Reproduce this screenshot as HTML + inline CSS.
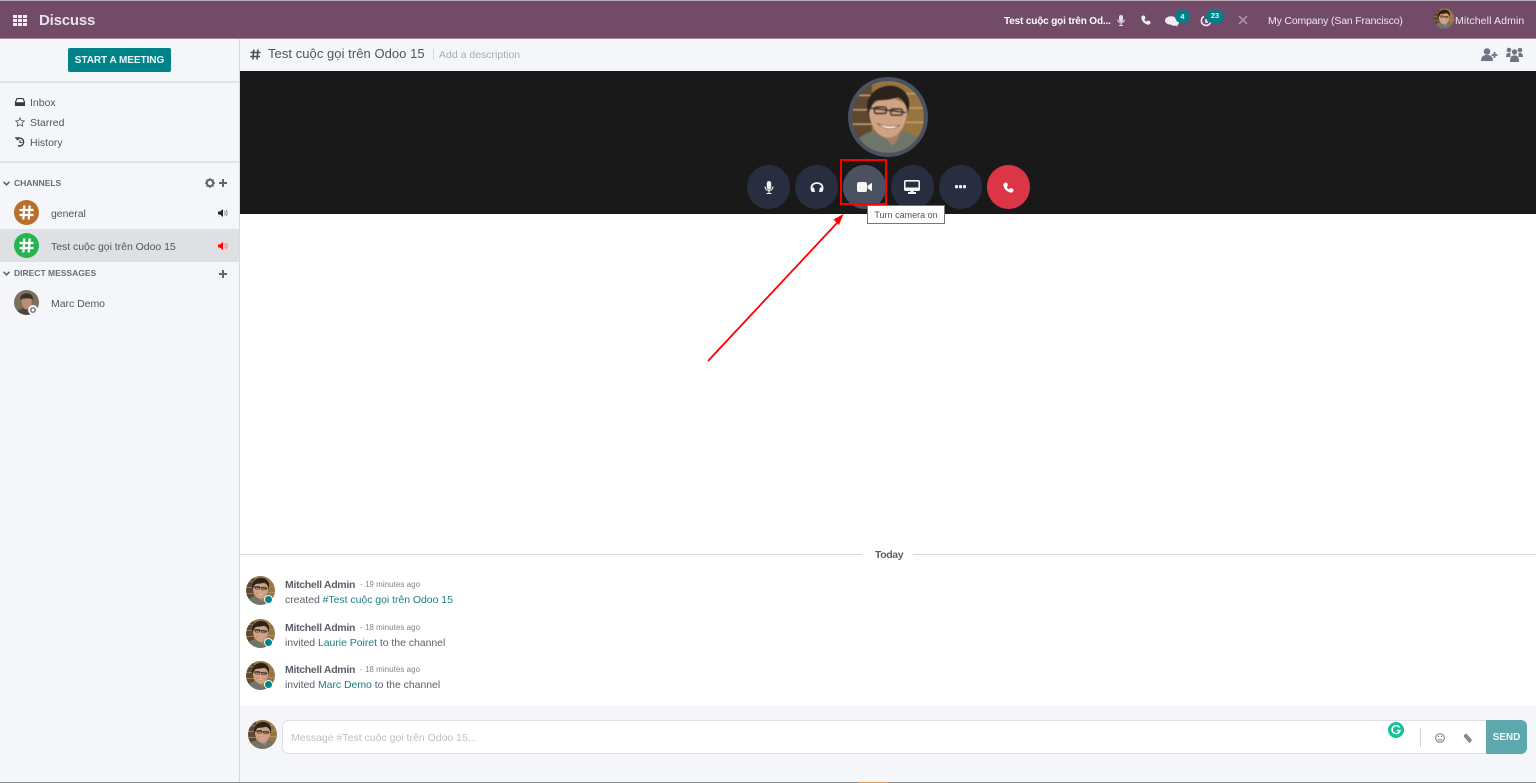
<!DOCTYPE html>
<html>
<head>
<meta charset="utf-8">
<style>
html,body{margin:0;padding:0;width:1536px;height:783px;overflow:hidden;background:#f4f6fa}
body{position:relative;font-family:"Liberation Sans","Noto Sans CJK SC",sans-serif;color:#4c4c4c}
.a{position:absolute;white-space:nowrap}
svg{position:absolute;display:block;overflow:visible}
.t12{font-size:10.5px;color:#51565f;line-height:14px}
.hd{font-size:8.5px;font-weight:bold;color:#666d78;line-height:12px}
.ch{font-size:10.5px;color:#4f5661;line-height:14px;letter-spacing:-.03px}
.btn{position:absolute;top:165px;width:43px;height:43.5px;border-radius:50%;background:#262e40}
.nm{font-size:10.5px;font-weight:bold;color:#5a5f68;line-height:14px;letter-spacing:-.3px}
.tm{font-size:8px;color:#80848b;line-height:12px;letter-spacing:.03px}
.ms{font-size:10.5px;color:#5a5f68;line-height:14px;letter-spacing:-.04px}
.ln{color:#1e7d80}
.dot{position:absolute;width:7px;height:7px;border-radius:50%;background:#00868a;border:1.5px solid #fff}
</style>
</head>
<body>
<svg width="0" height="0" style="position:absolute">
<defs>
<filter id="b" x="-5%" y="-5%" width="110%" height="110%"><feGaussianBlur stdDeviation=".7"/></filter>
<symbol id="face" viewBox="0 0 80 80">
<g filter="url(#b)">
<rect width="80" height="80" fill="#98743f"/>
<rect width="22" height="80" fill="#5f4730"/>
<path d="M0 16H22M0 32H22M0 48H22M60 14H80M60 30H80M60 46H80" stroke="#c09f6c" stroke-width="1.600"/>
<path d="M0 80C2 62 16 57 28 55L54 55C66 58 76 62 80 80Z" fill="#70756b"/>
<path d="M34 60L46 72 54 58Z" fill="#a97e64"/>
<path d="M19 28C18 48 28 63 40 63C52 63 63 48 61 26L40 16Z" fill="#d2a285"/>
<path d="M18 38C12 16 28 5 43 5C58 6 68 18 62 36C60 26 57 21 51 18C42 22 31 21 26 22C22 27 20 32 18 38Z" fill="#2c211b"/>
<path d="M20 30L60 35" stroke="#322a26" stroke-width="1.800"/>
<rect x="25" y="29" width="13" height="7" rx="2" fill="none" stroke="#322a26" stroke-width="1.800"/>
<rect x="43" y="31" width="13" height="7" rx="2" fill="none" stroke="#322a26" stroke-width="1.800"/>
<path d="M28 47C35 54 46 55 53 49C46 51 36 51 28 47Z" fill="#fff" stroke="#86493a" stroke-width=".8"/>
</g>
</symbol>
<symbol id="marc" viewBox="0 0 80 80">
<g filter="url(#b)">
<rect width="80" height="80" fill="#7d6e60"/>
<path d="M5 80C8 62 24 58 40 58C56 58 72 62 75 80Z" fill="#4d4640"/>
<path d="M24 30C24 50 32 62 41 62C50 62 58 50 57 28Z" fill="#bd8e70"/>
<path d="M20 34C18 14 32 10 44 11C56 12 62 20 60 34C56 24 30 22 20 34Z" fill="#3d332b"/>
</g>
</symbol>
</defs>
</svg>

<!-- main backgrounds -->
<div class="a" style="left:240px;top:214px;width:1296px;height:492px;background:#fff"></div>
<div class="a" style="left:240px;top:71px;width:1296px;height:143px;background:#191919"></div>

<!-- navbar -->
<div class="a" style="left:0;top:0;width:1536px;height:39px;background:#714b67;border-top:1px solid #b8a9b4;border-bottom:1px solid #a08a9b;box-sizing:border-box"></div>
<svg style="left:13px;top:15px" width="14" height="11" viewBox="0 0 14 11" fill="#f0ecef"><path d="M0 0h4v3H0zM5 0h4v3H5zM10 0h4v3h-4zM0 4h4v3H0zM5 4h4v3H5zM10 4h4v3h-4zM0 8h4v3H0zM5 8h4v3H5zM10 8h4v3h-4z"/></svg>
<div class="a" style="left:39px;top:12px;font-size:15px;font-weight:bold;color:#ecdfe9;line-height:18px;letter-spacing:-.2px">Discuss</div>
<div class="a" style="left:1004px;top:15px;font-size:10px;font-weight:bold;color:#fff;line-height:13px;letter-spacing:-.15px">Test cuộc gọi trên Od...</div>
<svg style="left:1117px;top:15px" width="8" height="11" viewBox="0 0 8 11"><rect x="2" y="0" width="4" height="7" rx="2" fill="#e5dde3"/><path d="M.7 4.5C.7 9 7.3 9 7.3 4.5M4 8V10.5M2 10.5H6" stroke="#e5dde3" fill="none"/></svg>
<svg style="left:1141px;top:15px" width="10" height="10" viewBox="0 0 24 24" fill="#f3eef2"><path d="M5 1L9 2 11 8 8 10C9 13 11 15 14 16L16 13 22 15 23 19C22 22 19 24 16 23 8 21 3 16 1 8 0 5 2 2 5 1Z"/></svg>
<svg style="left:1165px;top:16px" width="14" height="11" viewBox="0 0 14 11" fill="#f3eef2"><ellipse cx="6" cy="4.5" rx="6" ry="4.2"/><ellipse cx="9.5" cy="6.5" rx="4.5" ry="3.3"/><path d="M9 8L13 11 11 7Z"/></svg>
<div class="a" style="left:1175px;top:10px;width:15px;height:13px;border-radius:7px;background:#00808a;color:#e8f4f4;font-size:7.5px;font-weight:bold;line-height:13px;text-align:center">4</div>
<svg style="left:1200px;top:15px" width="12" height="12" viewBox="0 0 12 12" fill="none" stroke="#f3eef2" stroke-width="1.6"><path d="M4 1.5A4.7 4.7 0 1 0 10.7 6.5"/><path d="M6 4V7H8"/></svg>
<div class="a" style="left:1206px;top:10px;width:18px;height:13px;border-radius:7px;background:#00808a;color:#e8f4f4;font-size:7.5px;font-weight:bold;line-height:12px;text-align:center">23</div>
<svg style="left:1238px;top:15px" width="10" height="10" viewBox="0 0 10 10" stroke="#a995a5" stroke-width="1.7"><path d="M1 1L9 9M9 1L1 9"/></svg>
<div class="a" style="left:1268px;top:14.500px;font-size:10.500px;color:#f0e8ee;line-height:13px;letter-spacing:-.16px">My Company (San Francisco)</div>
<svg style="left:1434px;top:8px;border-radius:50%;overflow:hidden" width="20" height="21"><use href="#face" width="20" height="21"/></svg>
<div class="a" style="left:1455px;top:14.500px;font-size:10.500px;color:#f0e8ee;line-height:13px;letter-spacing:.12px">Mitchell Admin</div>

<!-- sidebar -->
<div class="a" style="left:239px;top:39px;width:1px;height:743px;background:#d8dade"></div>
<div class="a" style="left:68px;top:48px;width:103px;height:24px;background:#00848a;border-radius:2px;color:#eef8f8;font-size:10px;font-weight:bold;line-height:25px;text-align:center;letter-spacing:-.05px">START A MEETING</div>
<div class="a" style="left:0;top:81px;width:239px;height:2px;background:#e0e2e6"></div>
<svg style="left:15px;top:98px" width="10" height="8" viewBox="0 0 10 8"><path d="M2 .6H8L9.5 4V7.4H.5V4Z" fill="#fff" stroke="#343a45" stroke-width="1.1"/><rect x=".5" y="4.2" width="9" height="3.2" fill="#343a45"/></svg>
<div class="a t12" style="left:30px;top:96px">Inbox</div>
<svg style="left:15px;top:117px" width="10" height="10" viewBox="0 0 20 20" fill="none" stroke="#484e59" stroke-width="1.5"><path d="M10 1.5L12.6 7.2 18.7 7.9 14.2 12 15.4 18.2 10 15.100 4.600 18.200 5.800 12 1.300 7.900 7.400 7.200Z"/></svg>
<div class="a t12" style="left:30px;top:116px">Starred</div>
<svg style="left:15px;top:137px" width="10" height="10" viewBox="0 0 10 10" fill="none" stroke="#343a45" stroke-width="1.4"><path d="M1.5 2.5A4 4 0 1 1 3 8.7"/><path d="M0 .8H3V3.4" stroke-width="1.2"/><path d="M5 3V5.5H7" stroke-width="1"/></svg>
<div class="a t12" style="left:30px;top:136px">History</div>
<div class="a" style="left:0;top:161px;width:239px;height:2px;background:#e0e2e6"></div>

<svg style="left:3px;top:181px" width="7" height="5" viewBox="0 0 7 5" fill="none" stroke="#5c636e" stroke-width="1.5"><path d="M.5 .8L3.5 3.8 6.5 .8"/></svg>
<div class="a hd" style="left:14px;top:177px">CHANNELS</div>
<svg style="left:205px;top:178px" width="10" height="10" viewBox="0 0 10 10"><circle cx="5" cy="5" r="3.2" fill="none" stroke="#5f6670" stroke-width="2"/><path d="M5 0V10M0 5H10M1.5 1.5L8.500 8.500M8.500 1.500L1.500 8.500" stroke="#5f6670" stroke-width="1.400" stroke-dasharray="1.500 7 1.500 0"/></svg>
<svg style="left:219px;top:179px" width="8" height="8" viewBox="0 0 8 8" stroke="#5f6670" stroke-width="2"><path d="M4 0V8M0 4H8"/></svg>

<div class="a" style="left:14px;top:200px;width:25px;height:25px;border-radius:50%;background:#b96f2b"></div>
<svg style="left:19px;top:205px" width="15" height="15" viewBox="0 0 15 15" stroke="#fff" stroke-width="2.200"><path d="M5.300 .5L4.300 14.500M10.700 .5L9.700 14.500M.5 5H14.500M.5 10H14.500"/></svg>
<div class="a ch" style="left:51px;top:207px">general</div>
<svg style="left:218px;top:209px" width="10" height="8" viewBox="0 0 10 8"><path d="M0 2.500H2L5 0V8L2 5.500H0Z" fill="#20242c"/><path d="M6.500 1.800C7.500 3 7.500 5 6.500 6.200M8 .8C9.500 2.500 9.500 5.500 8 7.200" fill="none" stroke="#8a8f98"/></svg>

<div class="a" style="left:0;top:229px;width:239px;height:33px;background:#dee0e3"></div>
<div class="a" style="left:14px;top:233px;width:25px;height:25px;border-radius:50%;background:#27b44f"></div>
<svg style="left:19px;top:238px" width="15" height="15" viewBox="0 0 15 15" stroke="#fff" stroke-width="2.200"><path d="M5.300 .5L4.300 14.500M10.700 .5L9.700 14.500M.5 5H14.500M.5 10H14.500"/></svg>
<div class="a ch" style="left:51px;top:240px">Test cuộc gọi trên Odoo 15</div>
<svg style="left:218px;top:242px" width="10" height="8" viewBox="0 0 10 8"><path d="M0 2.500H2L5 0V8L2 5.500H0Z" fill="#f00"/><path d="M6.500 1.800C7.500 3 7.500 5 6.500 6.200M8 .8C9.500 2.500 9.500 5.500 8 7.200" fill="none" stroke="#e88"/></svg>

<svg style="left:3px;top:271px" width="7" height="5" viewBox="0 0 7 5" fill="none" stroke="#5c636e" stroke-width="1.500"><path d="M.5 .8L3.500 3.800 6.500 .8"/></svg>
<div class="a hd" style="left:14px;top:267px">DIRECT MESSAGES</div>
<svg style="left:219px;top:270px" width="8" height="8" viewBox="0 0 8 8" stroke="#5f6670" stroke-width="2"><path d="M4 0V8M0 4H8"/></svg>

<svg style="left:14px;top:290px;border-radius:50%;overflow:hidden" width="25" height="25"><use href="#marc" width="25" height="25"/></svg>
<div class="a" style="left:28px;top:305px;width:6px;height:6px;border-radius:50%;background:#fff;border:2px solid #f4f6fa;box-shadow:inset 0 0 0 1.500px #70757d"></div>
<div class="a ch" style="left:51px;top:297px">Marc Demo</div>

<!-- header -->
<svg style="left:250px;top:49px" width="11" height="11" viewBox="0 0 11 11" stroke="#4a505b" stroke-width="1.600"><path d="M3.800 .5L2.800 10.500M8 .5L7 10.500M.5 3.500H10.500M.2 7.500H10"/></svg>
<div class="a" style="left:268px;top:46px;font-size:13px;color:#4c5561;line-height:16px;letter-spacing:.05px">Test cuộc gọi trên Odoo 15</div>
<div class="a" style="left:433px;top:49px;width:1px;height:11px;background:#d5d7da"></div>
<div class="a" style="left:439px;top:48px;font-size:10.500px;color:#a7abb1;line-height:14px">Add a description</div>
<svg style="left:1481px;top:48px" width="17" height="13" viewBox="0 0 17 13" fill="#6f7681"><circle cx="6" cy="3.500" r="3.300"/><path d="M0 13C0 8 3 7 6 7S12 8 12 13Z"/><path d="M13.500 4V10M10.500 7H16.500" stroke="#6f7681" stroke-width="1.800"/></svg>
<svg style="left:1506px;top:47px" width="17" height="15" viewBox="0 0 17 15" fill="#6f7681"><circle cx="8.500" cy="5" r="2.700"/><circle cx="3" cy="3" r="2.300"/><circle cx="14" cy="3" r="2.300"/><path d="M0 10C0 6 2 5.500 4.500 6V10ZM17 10C17 6 15 5.500 12.500 6V10Z"/><path d="M4 15C4 9 6 8.500 8.500 8.500S13 9 13 15Z"/></svg>

<!-- call view -->
<div class="a" style="left:848px;top:77px;width:80px;height:80px;border-radius:50%;background:#4a5160"></div>
<svg style="left:852px;top:81px;border-radius:50%;overflow:hidden" width="72" height="72"><use href="#face" width="72" height="72"/></svg>

<div class="btn" style="left:747px"></div>
<svg style="left:764px;top:181px" width="10" height="13" viewBox="0 0 10 13"><rect x="2.800" y="0" width="4.400" height="8.500" rx="2.200" fill="#f4f4f4"/><path d="M1 5.500C1 10.800 9 10.800 9 5.500M5 9.500V12.500M2.500 12.500H7.500" stroke="#f4f4f4" stroke-width="1.100" fill="none"/></svg>
<div class="btn" style="left:795px"></div>
<svg style="left:810px;top:181px" width="14" height="12" viewBox="0 0 14 12" fill="none" stroke="#f4f4f4" stroke-width="1.800"><path d="M1.500 8V6.500C1.500 .5 12.500 .5 12.500 6.500V8"/><path d="M.8 6.500H4L5 11H3Q1 11 .8 9ZM13.200 6.500H10L9 11H11Q13 11 13.200 9Z" fill="#f4f4f4" stroke="none"/></svg>
<div class="btn" style="left:843px;background:#4a5160"></div>
<svg style="left:857px;top:182px" width="15" height="10" viewBox="0 0 15 10" fill="#f6f6f6"><rect x="0" y="0" width="10" height="10" rx="2"/><path d="M10.500 3.800L15 .8V9.200L10.500 6.200Z"/></svg>
<div class="btn" style="left:891px"></div>
<svg style="left:904px;top:180px" width="16" height="14" viewBox="0 0 16 14"><rect x=".8" y=".8" width="14.400" height="9.400" rx="1" fill="none" stroke="#f4f4f4" stroke-width="1.600"/><rect x="1" y="7.500" width="14" height="2.500" fill="#f4f4f4"/><rect x="4" y="12" width="8" height="2" fill="#f4f4f4"/><rect x="6.500" y="10" width="3" height="2" fill="#f4f4f4"/></svg>
<div class="btn" style="left:939px"></div>
<svg style="left:955px;top:185px" width="11" height="4" viewBox="0 0 11 4" fill="#f4f4f4"><rect x="0" y="0" width="3" height="3.400" rx="1"/><rect x="4" y="0" width="3" height="3.400" rx="1"/><rect x="8" y="0" width="3" height="3.400" rx="1"/></svg>
<div class="btn" style="left:987px;background:#dc3545"></div>
<svg style="left:1003px;top:182px" width="11" height="11" viewBox="0 0 24 24" fill="#fff"><path d="M5 1L9 2 11 8 8 10C9 13 11 15 14 16L16 13 22 15 23 19C22 22 19 24 16 23 8 21 3 16 1 8 0 5 2 2 5 1Z"/></svg>

<div class="a" style="left:840px;top:159px;width:47px;height:46px;border:2px solid #f00;box-sizing:border-box"></div>
<div class="a" style="left:867px;top:205px;width:78px;height:19px;background:#fff;border:1px solid #777;box-sizing:border-box;font-size:9px;color:#4f5560;line-height:19px;text-align:center">Turn camera on</div>

<!-- arrow -->
<svg style="left:700px;top:210px" width="150" height="160" viewBox="0 0 150 160"><path d="M8 151L137 13" stroke="#f00" stroke-width="1.800"/><path d="M143.500 4L133.500 9.500 139 15Z" fill="#f00"/></svg>

<!-- messages -->
<div class="a" style="left:240px;top:554px;width:622px;height:1px;background:#d5d7da"></div>
<div class="a" style="left:913px;top:554px;width:623px;height:1px;background:#d5d7da"></div>
<div class="a" style="left:875px;top:548px;font-size:10.500px;font-weight:bold;color:#5a5f68;line-height:14px;letter-spacing:-.4px">Today</div>

<svg style="left:246px;top:576px;border-radius:50%;overflow:hidden" width="29" height="29"><use href="#face" width="29" height="29"/></svg>
<div class="dot" style="left:264px;top:595px"></div>
<div class="a nm" style="left:285px;top:578px">Mitchell Admin</div>
<div class="a tm" style="left:360px;top:579px">- 19 minutes ago</div>
<div class="a ms" style="left:285px;top:593px">created <span class="ln">#Test cuộc gọi trên Odoo 15</span></div>

<svg style="left:246px;top:619px;border-radius:50%;overflow:hidden" width="29" height="29"><use href="#face" width="29" height="29"/></svg>
<div class="dot" style="left:264px;top:638px"></div>
<div class="a nm" style="left:285px;top:621px">Mitchell Admin</div>
<div class="a tm" style="left:360px;top:622px">- 18 minutes ago</div>
<div class="a ms" style="left:285px;top:636px">invited <span class="ln">Laurie Poiret</span> to the channel</div>

<svg style="left:246px;top:661px;border-radius:50%;overflow:hidden" width="29" height="29"><use href="#face" width="29" height="29"/></svg>
<div class="dot" style="left:264px;top:680px"></div>
<div class="a nm" style="left:285px;top:663px">Mitchell Admin</div>
<div class="a tm" style="left:360px;top:664px">- 18 minutes ago</div>
<div class="a ms" style="left:285px;top:678px">invited <span class="ln">Marc Demo</span> to the channel</div>

<!-- composer -->
<svg style="left:248px;top:720px;border-radius:50%;overflow:hidden" width="29" height="29"><use href="#face" width="29" height="29"/></svg>
<div class="a" style="left:282px;top:720px;width:1204px;height:34px;background:#fff;border:1px solid #dcdee3;border-right:0;border-radius:6px 0 0 6px;box-sizing:border-box"></div>
<div class="a" style="left:291px;top:731px;font-size:10.500px;color:#bcbfc5;line-height:14px">Message #Test cuộc gọi trên Odoo 15...</div>
<div class="a" style="left:1388px;top:722px;width:16px;height:16px;border-radius:50%;background:#15c39a"></div>
<svg style="left:1391px;top:725px" width="10" height="10" viewBox="0 0 10 10" fill="none" stroke="#fff" stroke-width="1.500"><path d="M8.500 2.500A4 4 0 1 0 9 5.500H6"/></svg>
<div class="a" style="left:1420px;top:728px;width:1px;height:19px;background:#cfd1d5"></div>
<svg style="left:1435px;top:733px" width="10" height="10" viewBox="0 0 10 10" fill="none" stroke="#73777e"><circle cx="5" cy="5" r="4.300"/><path d="M3 6C4 7.500 6 7.500 7 6"/><path d="M3 3.500H4M6 3.500H7"/></svg>
<svg style="left:1463px;top:733px" width="9" height="10" viewBox="0 0 9 10"><path d="M1 3L3 1 8.500 7 6.500 9.500Z" fill="#8d9096" stroke="#6f7378" stroke-width=".8"/></svg>
<div class="a" style="left:1486px;top:720px;width:41px;height:34px;background:#5ca8ac;border-radius:0 6px 6px 0;color:#eef7f7;font-size:10px;font-weight:bold;line-height:36px;text-align:center">SEND</div>

<!-- bottom strip -->
<div class="a" style="left:0;top:782px;width:1536px;height:1px;background:#8a8c90"></div>
<div class="a" style="left:859px;top:782px;width:29px;height:1px;background:#e09a5a"></div>
</body>
</html>
